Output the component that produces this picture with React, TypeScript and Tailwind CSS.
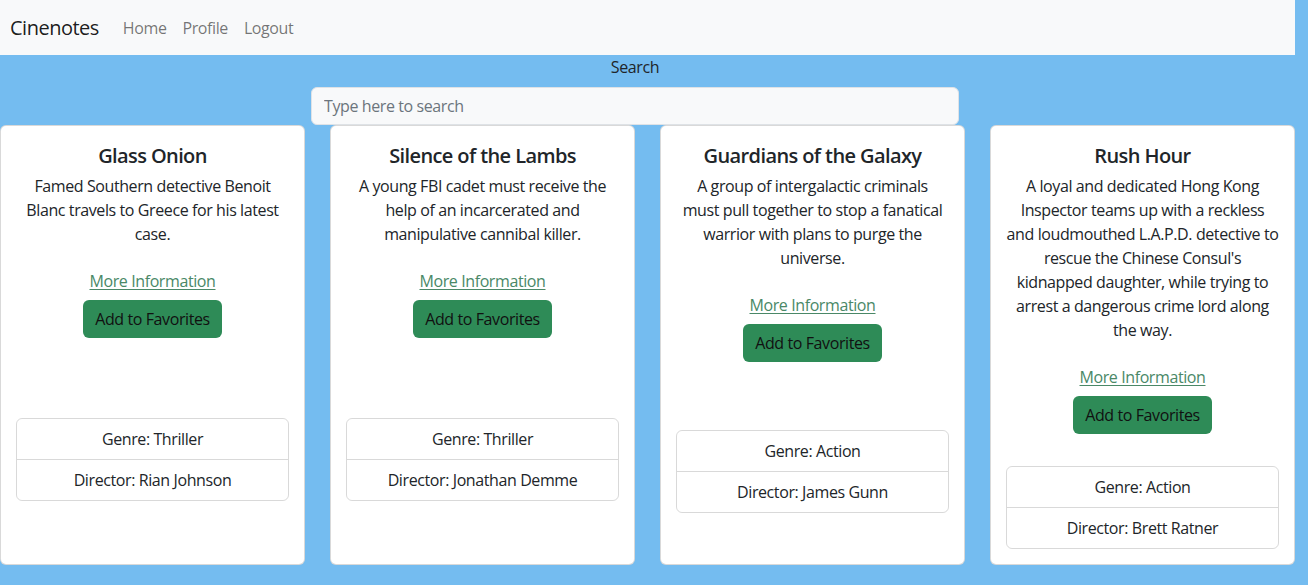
import React from "react";

type Movie = {
  title: string;
  description: string[];
  genre: string;
  director: string;
};

// description kept line by line so the wrap matches the original layout
const movies: Movie[] = [
  {
    title: "Glass Onion",
    description: [
      "Famed Southern detective Benoit",
      "Blanc travels to Greece for his latest",
      "case."
    ],
    genre: "Thriller",
    director: "Rian Johnson"
  },
  {
    title: "Silence of the Lambs",
    description: [
      "A young FBI cadet must receive the",
      "help of an incarcerated and",
      "manipulative cannibal killer."
    ],
    genre: "Thriller",
    director: "Jonathan Demme"
  },
  {
    title: "Guardians of the Galaxy",
    description: [
      "A group of intergalactic criminals",
      "must pull together to stop a fanatical",
      "warrior with plans to purge the",
      "universe."
    ],
    genre: "Action",
    director: "James Gunn"
  },
  {
    title: "Rush Hour",
    description: [
      "A loyal and dedicated Hong Kong",
      "Inspector teams up with a reckless",
      "and loudmouthed L.A.P.D. detective to",
      "rescue the Chinese Consul's",
      "kidnapped daughter, while trying to",
      "arrest a dangerous crime lord along",
      "the way."
    ],
    genre: "Action",
    director: "Brett Ratner"
  }
];

const MovieCard: React.FC<{ movie: Movie }> = ({ movie }) => {
  return (
    <div className="w-[305px] h-[440px] shrink-0 bg-white border border-black/15 rounded-md flex flex-col">
      <div className="p-4 text-center">
        <h5 className="text-[20px] leading-[24px] font-semibold tracking-[-0.6px] mt-[2px] mb-[6px]">
          {movie.title}
        </h5>
        <p className="mb-[23px] -mx-2">
          {movie.description.map((line) => (
            <span key={line} className="block whitespace-nowrap">
              {line}
            </span>
          ))}
        </p>
        <a
          href="#"
          className="block underline text-[#4a8867] decoration-1 underline-offset-2"
        >
          More Information
        </a>
        <button className="mt-[7px] bg-[#2e8b57] text-[#111] rounded-md px-3 h-[38px] leading-[24px]">
          Add to Favorites
        </button>
      </div>
      {/* list sits in the middle of the leftover space */}
      <ul className="my-auto mx-[15px] border border-black/15 rounded-md text-center">
        <li className="py-2 border-b border-black/15">Genre: {movie.genre}</li>
        <li className="py-2">Director: {movie.director}</li>
      </ul>
    </div>
  );
};

export default function App() {
  return (
    <div
      className="min-h-screen bg-[#74bcf0] text-[#212529] text-base leading-6 tracking-[-0.4px]"
      style={{ fontFamily: '"Open Sans", "Noto Sans", sans-serif' }}
    >
      <div className="w-[1295px]">
        <nav className="h-[55px] bg-[#f8f9fa] flex items-center px-[10px]">
          <span className="text-[20px] mr-4 text-black/90 tracking-[-0.5px]">Cinenotes</span>
          <a href="#" className="px-2 text-black/55">Home</a>
          <a href="#" className="px-2 text-black/55">Profile</a>
          <a href="#" className="px-2 text-black/55">Logout</a>
        </nav>

        <div className="w-[648px] ml-[311px] text-center">
          <div className="mb-2">Search</div>
          <input
            type="text"
            placeholder="Type here to search"
            className="w-full h-[38px] px-3 bg-[#f8f9fa] border border-[#dee2e6] rounded-md placeholder:text-[#6c757d] outline-none tracking-[-0.4px]"
          />
        </div>

        <div className="flex gap-[25px]">
          {movies.map((movie) => (
            <MovieCard key={movie.title} movie={movie} />
          ))}
        </div>
      </div>
    </div>
  );
}
